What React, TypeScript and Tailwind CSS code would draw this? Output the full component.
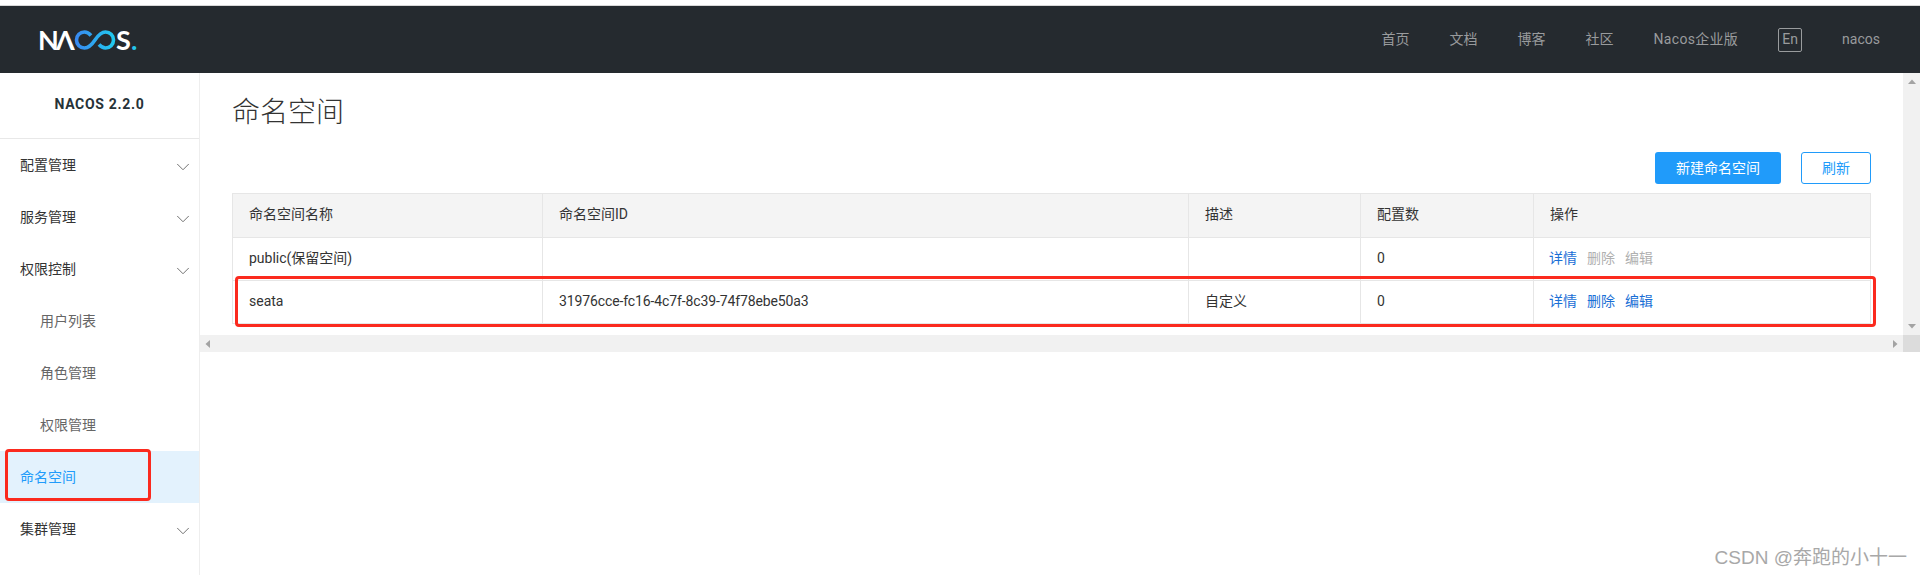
import React from 'react';
import { ChevronDown } from 'lucide-react';

const navLinks = ['首页', '文档', '博客', '社区'];

const menu = [
  { label: '配置管理', arrow: true },
  { label: '服务管理', arrow: true },
  { label: '权限控制', arrow: true },
  { label: '用户列表', sub: true },
  { label: '角色管理', sub: true },
  { label: '权限管理', sub: true },
  { label: '命名空间', active: true },
  { label: '集群管理', arrow: true },
];

const rows = [
  { name: 'public(保留空间)', id: '', desc: '', count: '0', locked: true },
  { name: 'seata', id: '31976cce-fc16-4c7f-8c39-74f78ebe50a3', desc: '自定义', count: '0', locked: false },
];

const Logo = () => (
  <div className="flex items-center h-[19px] text-white text-[27px] font-bold leading-none font-['Lato',sans-serif]" aria-label="NACOS">
    <span className="w-[18px]">N</span>
    <span className="w-[18px]">Λ</span>
    <svg width="42" height="20" viewBox="0 0 42 20" fill="none">
      <defs>
        <linearGradient id="inf" x1="0" y1="0" x2="42" y2="0" gradientUnits="userSpaceOnUse">
          <stop offset="0" stopColor="#3a86f0" />
          <stop offset="1" stopColor="#1fcdf0" />
        </linearGradient>
      </defs>
      <path
        d="M17 5.500C15 3.200 13 2 10.500 2 6 2 2.500 5.500 2.500 10s3.500 8 8 8c4.500 0 7.500-3.500 10.500-8s6-8 10.500-8 8 3.500 8 8-3.500 8-8 8c-2.500 0-4.500-1.200-6.500-3.500"
        stroke="url(#inf)"
        strokeWidth="3.6"
      />
    </svg>
    <span className="w-[15px]">S</span>
    <span className="w-[4px] text-[#25c5ec]">.</span>
  </div>
);

const Arrow = ({ dir }: { dir: 'up' | 'down' | 'left' | 'right' }) => (
  <svg width="8" height="8" viewBox="0 0 8 8" fill="#a3a3a3">
    {dir === 'up' && <path d="M4 1.500 8 6H0z" />}
    {dir === 'down' && <path d="M4 6.500 8 2H0z" />}
    {dir === 'left' && <path d="M1.500 4 6 0v8z" />}
    {dir === 'right' && <path d="M6.500 4 2 0v8z" />}
  </svg>
);

const App = () => {
  return (
    <div className="relative w-[1920px] h-[575px] overflow-hidden bg-white pt-[5px] text-[14px] text-[#333] font-['Roboto','Noto_Sans_CJK_SC',sans-serif]">
      <header className="h-[68px] bg-[#252a2f] flex items-center justify-between pl-[38px] pr-[40px] border-t border-[#d8d8d8]">
        <Logo />
        <nav className="flex items-center gap-[40px] text-[#999b9d]">
          {navLinks.map((link) => (
            <span key={link}>{link}</span>
          ))}
          <span className="tracking-[0.3px]">Nacos企业版</span>
          <span className="w-[24px] h-[24px] border border-[#999b9d] rounded-[2px] flex items-center justify-center">En</span>
          <span>nacos</span>
        </nav>
      </header>

      <div className="flex h-[502px]">
        <aside className="w-[200px] shrink-0 border-r border-[#eeeeee]">
          <div className="h-[66px] border-b border-[#e8e8e8] flex items-center justify-center font-bold tracking-[0.7px] text-[#263238] pb-[3px]">
            NACOS 2.2.0
          </div>
          {menu.map((item) => (
            <div
              key={item.label}
              className={`h-[52px] flex items-center justify-between pr-[5px] ${item.sub ? 'pl-[40px]' : 'pl-[20px]'} ${item.active ? 'bg-[#e3f2fd] text-[#209bfa]' : item.sub ? 'text-[#666]' : ''}`}
            >
              <span>{item.label}</span>
              {item.arrow && <ChevronDown className="w-[22px] h-[22px] text-[#666] mt-[4px]" strokeWidth={1} />}
            </div>
          ))}
        </aside>

        <div className="flex-1 flex flex-col">
          <div className="flex h-[262px]">
            <main className="w-[1703px] px-[32px]">
              <h1 className="text-[28px] font-light leading-[40px] mt-[20px] text-[#333]">命名空间</h1>
              <div className="flex justify-end gap-[20px] mt-[19px]">
                <button className="w-[126px] h-[32px] bg-[#209bfa] text-white rounded-[3px]">新建命名空间</button>
                <button className="w-[70px] h-[32px] border border-[#209bfa] text-[#209bfa] rounded-[3px]">刷新</button>
              </div>
              <table className="mt-[9px] w-[1638px] table-fixed border-collapse border border-[#e6e6e6]">
                <colgroup>
                  <col className="w-[310px]" />
                  <col className="w-[646px]" />
                  <col className="w-[172px]" />
                  <col className="w-[173px]" />
                  <col className="w-[337px]" />
                </colgroup>
                <thead>
                  <tr className="h-[44px] bg-[#f4f4f4]">
                    {['命名空间名称', '命名空间ID', '描述', '配置数', '操作'].map((col) => (
                      <th key={col} className="border border-[#e6e6e6] pl-[16px] pb-[2px] text-left font-normal">
                        {col}
                      </th>
                    ))}
                  </tr>
                </thead>
                <tbody>
                  {rows.map((row) => (
                    <tr key={row.name} className="h-[43px]">
                      <td className="border border-[#e6e6e6] pl-[16px] pb-[2px]">{row.name}</td>
                      <td className="border border-[#e6e6e6] pl-[16px] pb-[2px] tracking-[-0.12px]">{row.id}</td>
                      <td className="border border-[#e6e6e6] pl-[16px] pb-[2px]">{row.desc}</td>
                      <td className="border border-[#e6e6e6] pl-[16px] pb-[2px]">{row.count}</td>
                      <td className="border border-[#e6e6e6] pl-[15px] pb-[2px]">
                        <div className="flex gap-[10px]">
                          <span className="text-[#1a6fd6]">详情</span>
                          <span className={row.locked ? 'text-[#b0b0b0]' : 'text-[#1a6fd6]'}>删除</span>
                          <span className={row.locked ? 'text-[#b0b0b0]' : 'text-[#1a6fd6]'}>编辑</span>
                        </div>
                      </td>
                    </tr>
                  ))}
                </tbody>
              </table>
            </main>
            <div className="w-[17px] bg-[#f1f1f1] flex flex-col items-center justify-between py-[5px]">
              <Arrow dir="up" />
              <Arrow dir="down" />
            </div>
          </div>
          <div className="flex h-[17px]">
            <div className="flex-1 bg-[#f1f1f1] flex items-center justify-between px-[4px]">
              <Arrow dir="left" />
              <Arrow dir="right" />
            </div>
            <div className="w-[17px] bg-[#dcdcdc]" />
          </div>
        </div>
      </div>

      {/* annotation boxes from the screenshot */}
      <div className="absolute left-[5px] top-[449px] w-[146px] h-[52px] border-[3px] border-[#fb2a1e] rounded-[4px]" />
      <div className="absolute left-[235px] top-[276px] w-[1641px] h-[51px] border-[3px] border-[#fb2a1e] rounded-[4px]" />

      <div className="absolute right-[13px] bottom-[3px] text-[19px] text-[#a8a8a8] font-['Liberation_Sans','Noto_Sans_CJK_SC',sans-serif]">
        CSDN @奔跑的小十一
      </div>
    </div>
  );
};

export default App;
